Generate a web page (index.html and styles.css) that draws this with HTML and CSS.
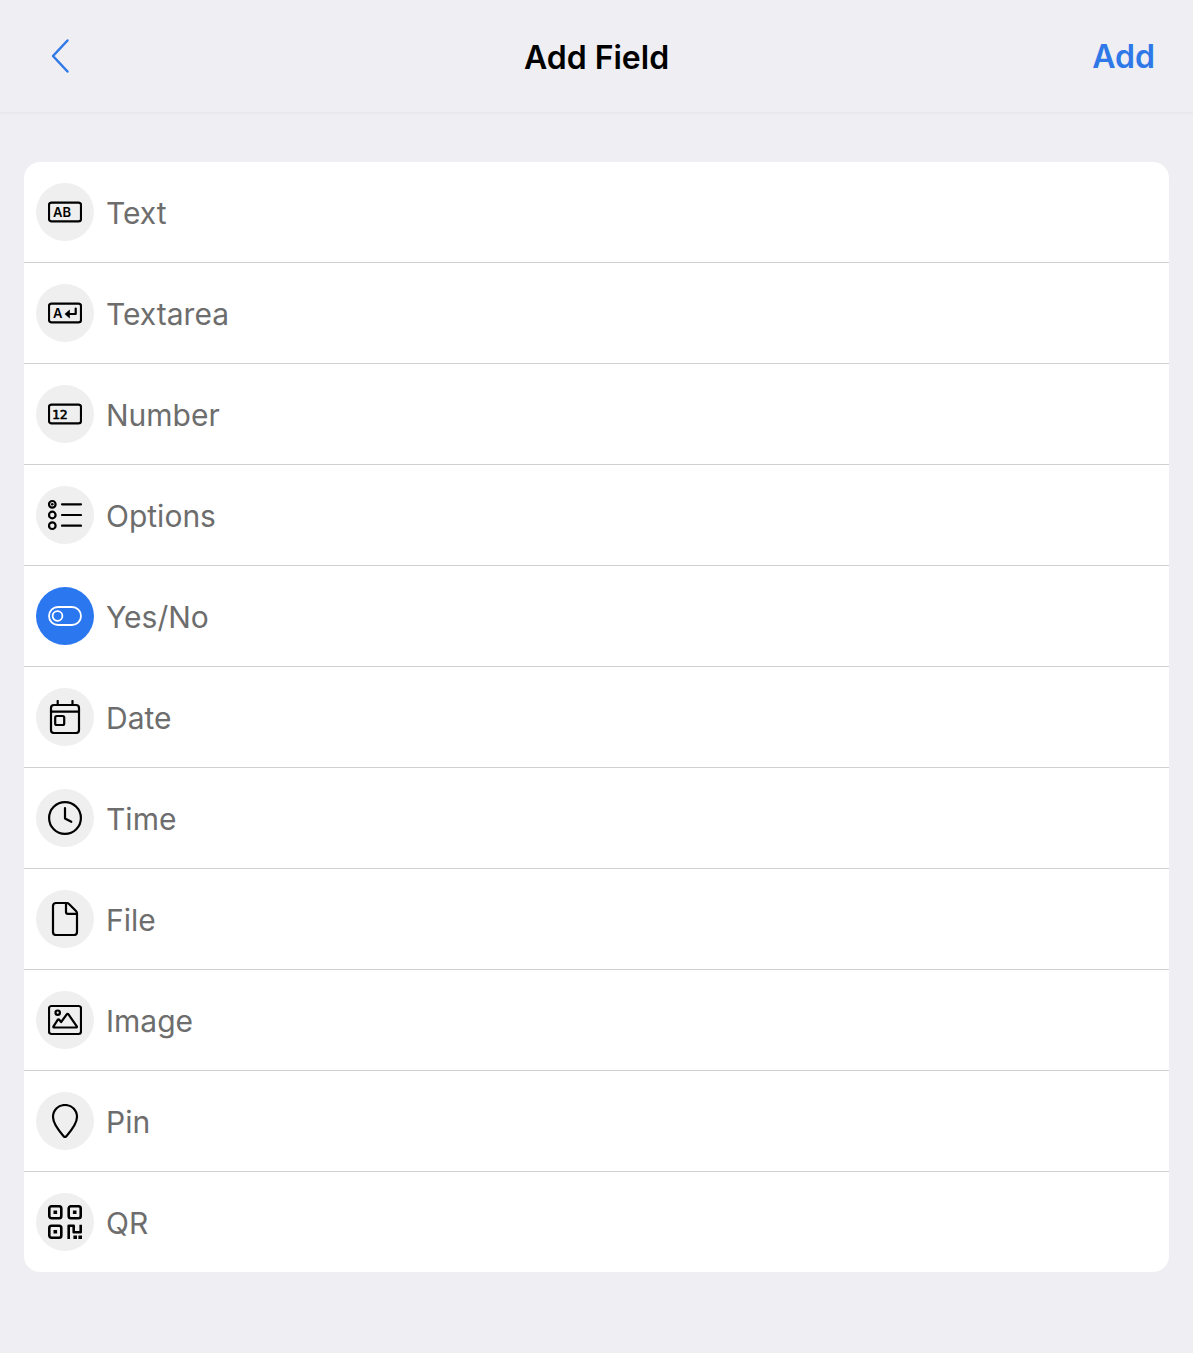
FILE: index.html
```html
<!DOCTYPE html>
<html lang="en">
<head>
  <meta charset="utf-8">
  <meta name="viewport" content="width=device-width, initial-scale=1">
  <title>Add Field</title>
  <link rel="stylesheet" href="styles.css">
</head>
<body>
  <form class="page">
    <header class="topbar">
      <button class="back" type="button" aria-label="Back">
        <svg class="chevron" viewBox="0 0 20 36" aria-hidden="true"><path d="M17.500 2.500 3 18l14.500 15.500"/></svg>
      </button>
      <h1 class="title">Add Field</h1>
      <button class="add" type="submit">Add</button>
    </header>

    <main class="content">
      <div class="list" role="radiogroup" aria-label="Field type">
        <label class="row">
          <span class="badge">
            <input class="radio" type="radio" name="type" value="text">
            <svg class="icon" viewBox="0 0 34 34" aria-hidden="true">
              <rect x="1" y="7.600" width="32" height="18.800" rx="2.500"/>
              <text class="glyph" x="5" y="21.500">AB</text>
            </svg>
          </span>
          <span class="name">Text</span>
        </label>
        <label class="row">
          <span class="badge">
            <input class="radio" type="radio" name="type" value="textarea">
            <svg class="icon" viewBox="0 0 34 34" aria-hidden="true">
              <rect x="1" y="7.600" width="32" height="18.800" rx="2.500"/>
              <text class="glyph" x="5" y="21.500">A</text>
              <path d="M27.700 12.500v5.500H20"/>
              <path class="solid" d="M16.600 18 21.800 13.500v9z"/>
            </svg>
          </span>
          <span class="name">Textarea</span>
        </label>
        <label class="row">
          <span class="badge">
            <input class="radio" type="radio" name="type" value="number">
            <svg class="icon" viewBox="0 0 34 34" aria-hidden="true">
              <rect x="1" y="7.600" width="32" height="18.800" rx="2.500"/>
              <text class="glyph digits" x="4" y="21.500">12</text>
            </svg>
          </span>
          <span class="name">Number</span>
        </label>
        <label class="row">
          <span class="badge">
            <input class="radio" type="radio" name="type" value="options">
            <svg class="icon" viewBox="0 0 34 34" aria-hidden="true">
              <circle cx="4.300" cy="6.300" r="3.300"/>
              <circle cx="4.300" cy="17" r="3.300"/>
              <circle cx="4.300" cy="27.700" r="3.300"/>
              <circle class="solid" cx="4.300" cy="6.300" r="1.300"/>
              <path d="M14 6.300h19M14 17h19M14 27.700h19"/>
            </svg>
          </span>
          <span class="name">Options</span>
        </label>
        <label class="row">
          <span class="badge">
            <input class="radio" type="radio" name="type" value="yesno" checked>
            <svg class="icon" viewBox="0 0 34 34" aria-hidden="true">
              <rect x="1" y="8" width="32" height="18" rx="9"/>
              <circle cx="9.500" cy="17" r="4.900"/>
            </svg>
          </span>
          <span class="name">Yes/No</span>
        </label>
        <label class="row">
          <span class="badge">
            <input class="radio" type="radio" name="type" value="date">
            <svg class="icon" viewBox="0 0 34 34" aria-hidden="true">
              <rect x="3" y="5" width="28" height="28" rx="3"/>
              <path d="M3 11.700h28M9.700 1v4M24.500 1v4"/>
              <rect x="7.200" y="16" width="9" height="9" rx="1.500"/>
            </svg>
          </span>
          <span class="name">Date</span>
        </label>
        <label class="row">
          <span class="badge">
            <input class="radio" type="radio" name="type" value="time">
            <svg class="icon" viewBox="0 0 34 34" aria-hidden="true">
              <circle cx="17" cy="17" r="15.900"/>
              <path d="M17 7v10.500l6.300 3.300"/>
            </svg>
          </span>
          <span class="name">Time</span>
        </label>
        <label class="row">
          <span class="badge">
            <input class="radio" type="radio" name="type" value="file">
            <svg class="icon" viewBox="0 0 34 34" aria-hidden="true">
              <path d="M8 1h10.500q1.500 0 2.500 1l7 7q1 1 1 2.500V30a3 3 0 0 1-3 3H8a3 3 0 0 1-3-3V4a3 3 0 0 1 3-3z"/>
              <path d="M18 1.500V10a1.800 1.800 0 0 0 1.800 1.800H29"/>
            </svg>
          </span>
          <span class="name">File</span>
        </label>
        <label class="row">
          <span class="badge">
            <input class="radio" type="radio" name="type" value="image">
            <svg class="icon" viewBox="0 0 34 34" aria-hidden="true">
              <rect x="1" y="3" width="32" height="28" rx="2.500"/>
              <circle cx="9.700" cy="9.700" r="2.200"/>
              <path d="M6 24.500q-1-.2-.5-1.200l4.200-6.500q.8-1 1.600 0l1.800 2.300 5.600-7.700q.9-1.200 1.800 0l8.300 12q.5.900-.5 1.100z"/>
            </svg>
          </span>
          <span class="name">Image</span>
        </label>
        <label class="row">
          <span class="badge">
            <input class="radio" type="radio" name="type" value="pin">
            <svg class="icon" viewBox="0 0 34 34" aria-hidden="true">
              <path d="M17 1C10 1 5 6.500 5 13c0 5.500 6.500 14.500 10.800 19.400q1.200 1.200 2.400 0C22.500 27.500 29 18.500 29 13 29 6.500 24 1 17 1z"/>
            </svg>
          </span>
          <span class="name">Pin</span>
        </label>
        <label class="row">
          <span class="badge">
            <input class="radio" type="radio" name="type" value="qr">
            <svg class="icon icon-qr" viewBox="0 0 34 34" aria-hidden="true">
              <rect x="1.300" y="1.300" width="12" height="12" rx="2.200"/>
              <rect x="20.700" y="1.300" width="12" height="12" rx="2.200"/>
              <rect x="1.300" y="20.700" width="12" height="12" rx="2.200"/>
              <path d="M20.700 34V20.700h5v6.500h7v-7.500"/>
              <path class="solid" d="M5.500 5.500h3.600v3.600H5.500zM24.900 5.500h3.600v3.600h-3.600zM5.500 24.900h3.600v3.600H5.500zM25.400 30.400H29V34h-3.600zM30.400 30.400H34V34h-3.600z"/>
            </svg>
          </span>
          <span class="name">QR</span>
        </label>
      </div>
    </main>
  </form>
</body>
</html>
```
FILE: styles.css
```css
* {
  box-sizing: border-box;
}

body {
  margin: 0;
  min-height: 100vh;
  background: #eeeef3;
  color: #000;
  font-family: Inter, "Liberation Sans", sans-serif;
}

.topbar {
  display: grid;
  grid-template-columns: 1fr auto 1fr;
  align-items: center;
  height: 114px;
  padding: 0 38px;
  border-bottom: 2px solid #e9e9eb;
}

.back,
.add {
  padding: 0;
  border: 0;
  background: none;
  color: #2f78e8;
  font: inherit;
  cursor: pointer;
}

.back {
  justify-self: start;
  display: flex;
  padding: 0 12px;
}

.chevron {
  width: 20px;
  height: 36px;
  fill: none;
  stroke: currentColor;
  stroke-width: 2.5;
  stroke-linecap: round;
  stroke-linejoin: round;
}

.title {
  margin: 0;
  padding-top: 4px;
  font-size: 32px;
  line-height: 40px;
  font-weight: 600;
}

.add {
  justify-self: end;
  padding-top: 2px;
  font-size: 32px;
  line-height: 40px;
  font-weight: 600;
}

.content {
  padding: 48px 24px;
}

.list {
  overflow: hidden;
  border-radius: 16px;
  background: #fff;
}

.row {
  display: flex;
  align-items: center;
  gap: 12px;
  height: 101px;
  padding: 0 12px;
  border-bottom: 1px solid #d1d1d3;
  cursor: pointer;
}

.row:last-child {
  height: 100px;
  border-bottom: 0;
}

.badge {
  display: grid;
  place-items: center;
  width: 58px;
  height: 58px;
}

.radio,
.icon {
  grid-area: 1 / 1;
}

.radio {
  appearance: none;
  width: 58px;
  height: 58px;
  margin: 0;
  border-radius: 50%;
  background: #efefef;
  cursor: pointer;
}

.radio:checked {
  background: #2b77f0;
}

.icon {
  width: 34px;
  height: 34px;
  color: #000;
  fill: none;
  stroke: currentColor;
  stroke-width: 2.2;
  stroke-linecap: round;
  stroke-linejoin: round;
  pointer-events: none;
}

.radio:checked + .icon {
  color: #fff;
  stroke-width: 1.8;
}

.icon-qr {
  stroke-width: 2.6;
  stroke-linecap: butt;
}

.solid {
  fill: currentColor;
  stroke: none;
}

.glyph {
  fill: currentColor;
  stroke: none;
  font-family: Inter, sans-serif;
  font-size: 13px;
  font-weight: 600;
}

.digits {
  font-family: "DejaVu Sans Mono", monospace;
  font-weight: 400;
  stroke: currentColor;
  stroke-width: 0.6;
}

.name {
  padding-top: 2px;
  color: #6d6d6d;
  font-size: 30px;
  line-height: 40px;
}
```
